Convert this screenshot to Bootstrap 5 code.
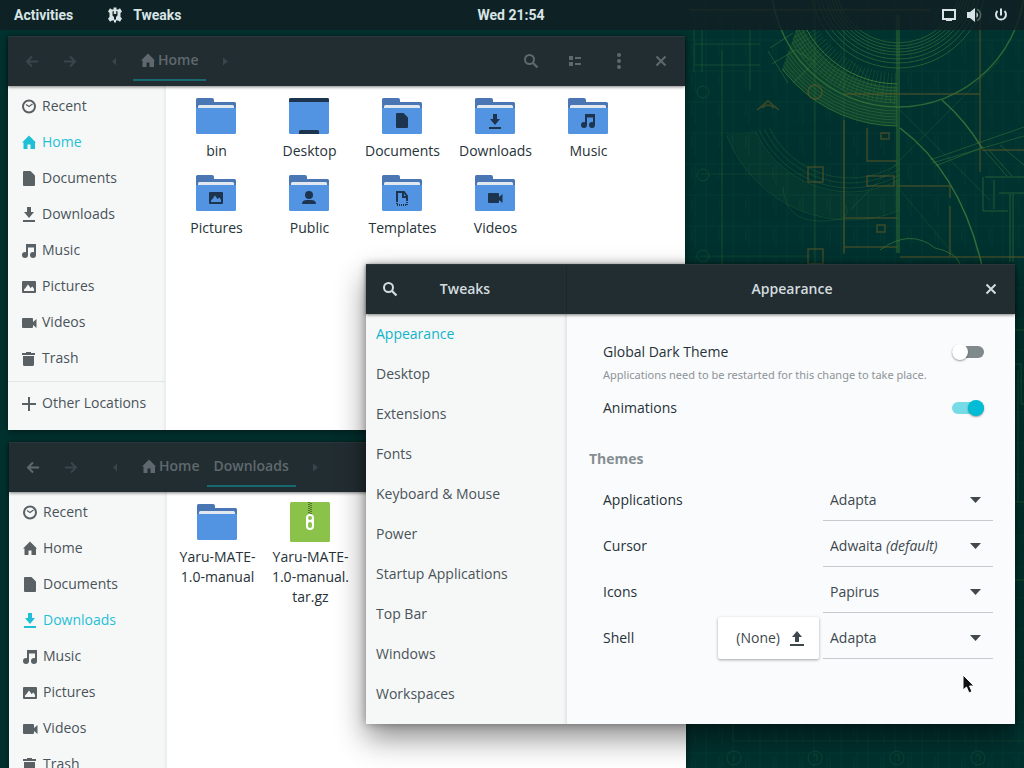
<!DOCTYPE html>
<html lang="en">
<head>
<meta charset="utf-8">
<meta name="viewport" content="width=device-width, initial-scale=1">
<title>Desktop</title>
<link href="https://cdn.jsdelivr.net/npm/bootstrap@5.3.0/dist/css/bootstrap.min.css" rel="stylesheet">
<style>
  body { font-family: "Open Sans", "Noto Sans", sans-serif; font-size: 14px; line-height: 20px; background: #00322f; color: #263238; }
  .desktop { height: 100vh; }
  .wallpaper { inset: 0; }
  .topbar { display: grid; grid-template-columns: 1fr auto 1fr; height: 30px; padding: 0 16px 0 14px; background: rgba(18, 30, 35, .78); color: #d8e4e6; font-family: Roboto, sans-serif; font-weight: 700; }
  .topbar button, .headbar button { color: inherit; background: none; border: 0; padding: 0; font: inherit; }
  svg { display: block; flex: none; }

  .window { background: #fff; display: flex; flex-direction: column; isolation: isolate; box-shadow: 0 2px 8px rgba(0, 0, 0, .45); }
  .win-home { left: 8px; right: 339px; top: 36px; }
  .win-downloads { left: 9px; right: 338px; top: 442px; bottom: 0; }
  .win-tweaks { left: 366px; right: 9px; top: 264px; background: #fafbfd; box-shadow: 0 14px 28px rgba(0, 0, 0, .45), 0 0 8px rgba(0, 0, 0, .3); }

  .headbar { height: 50px; flex: none; padding: 0 4px 2px 5px; background: #222d32; color: #5f696d; border-top: 1px solid #2b363a; box-shadow: 0 1px 3px rgba(0, 0, 0, .5); font-weight: 600; position: relative; z-index: 1; }
  .headbar .tool { width: 38px; height: 46px; display: flex; align-items: center; justify-content: center; }
  .headbar .tool-wide { width: 44px; }
  .headbar .tool-prev { width: 44px; padding-left: 5px; }
  .headbar .tool-close { width: 40px; }
  .headbar button:disabled { color: #39454a; }
  .crumb { height: 40px; padding: 0 7px; border-bottom: 2px solid transparent; color: #5f696d; text-decoration: none; display: flex; align-items: center; gap: 2px; }
  .crumb.current { border-color: #17696f; }

  .places { width: 158px; flex: none; background: #f6f8f8; border-right: 1px solid #eceeef; box-shadow: inset -3px 0 3px -2px rgba(0, 0, 0, .05); padding-top: 2px; }
  .places-full { padding-bottom: 9px; }
  .place { display: flex; align-items: center; gap: 5px; height: 36px; padding-left: 13px; color: #4a5358; text-decoration: none; white-space: nowrap; }
  .place svg { color: #596165; }
  .place.active, .place.active svg { color: #1fc0d5; }
  .places hr { margin: 5px 0 3px; border-color: #a9afb2; }

  .files { display: flex; flex-wrap: wrap; align-content: flex-start; row-gap: 12px; padding: 10px 0 0 4px; flex: 1; min-width: 0; }
  .file { width: 93px; text-align: center; color: #263238; text-decoration: none; }
  .file svg { margin: 0 0 5px 26px; }

  .win-tweaks .headbar { color: #d3dcdf; padding: 0 2px 2px; }
  .side-col { width: 201px; flex: none; }
  .headbar .side-col { width: 199px; border-right: 1px solid #1d272b; }
  .sections { background: #f6f8f8; border-right: 1px solid #e4e7e8; box-shadow: inset -3px 0 3px -2px rgba(0, 0, 0, .08); padding-bottom: 10px; }
  .section-link { display: flex; align-items: center; height: 40px; padding-left: 10px; color: #4a5358; text-decoration: none; }
  .section-link.active { color: #10b4c8; }
  .settings { padding: 28px 22px 0 36px; }
  .setting { display: flex; align-items: center; justify-content: space-between; }
  .setting-switch { padding-right: 9px; height: 20px; }
  .hint { font-family: "Noto Sans", sans-serif; font-size: 11px; line-height: 18px; color: #8c9497; margin: 4px 0 14px; }
  .settings h2 { font-size: 14px; line-height: 20px; font-weight: 700; color: #868e91; margin: 31px 0 10px -14px; }
  .theme-row { height: 42px; margin-bottom: 4px; }
  .pick { width: 170px; position: relative; }
  .pick select { width: 100%; height: 42px; appearance: none; border: 0; border-bottom: 1px solid #c6cacc; border-radius: 0; background: transparent; color: #3d484d; padding: 0 30px 0 7px; font: inherit; line-height: 20px; }
  .pick svg { position: absolute; right: 12px; top: 18px; pointer-events: none; color: #40484c; }
  .pick em { position: absolute; left: 63px; top: 11px; pointer-events: none; color: #3d484d; }
  .load { display: flex; align-items: center; gap: 9px; height: 42px; padding: 0 14px 0 18px; margin-right: 4px; border: 0; border-radius: 2px; background: #fff; color: #3d484d; box-shadow: 0 1px 3px rgba(0, 0, 0, .35); }
  .toggle { appearance: none; width: 32px; height: 16px; margin: 0; position: relative; }
  .toggle::before { content: ""; position: absolute; inset: 2px 0; border-radius: 6px; background: #80898c; }
  .toggle::after { content: ""; position: absolute; left: 0; top: 0; width: 16px; height: 16px; border-radius: 8px; background: #fff; box-shadow: 0 1px 2px rgba(0, 0, 0, .4); }
  .toggle:checked::before { background: #74dbe7; }
  .toggle:checked::after { left: 16px; background: #00bcd4; }
  .pointer { left: 962px; top: 674px; }
</style>
</head>
<body class="overflow-hidden">

<svg class="d-none" aria-hidden="true">
  <symbol id="i-clock" viewBox="0 0 16 16"><circle cx="8" cy="8.500" r="6" fill="none" stroke="currentColor" stroke-width="2"/><path d="M5 6.500l3 2 3.500-2.500" fill="none" stroke="currentColor" stroke-width="1.300"/></symbol>
  <symbol id="i-home" viewBox="0 0 16 16"><path d="M8 1.500L15 8.500h-1V15H9.500V10.500h-3V15H2.500V8.500H1z" fill="currentColor"/></symbol>
  <symbol id="i-doc" viewBox="0 0 16 16"><path d="M3 1h6.500L14 5.500V15a1 1 0 0 1-1 1H3a1 1 0 0 1-1-1V2a1 1 0 0 1 1-1z" fill="currentColor"/></symbol>
  <symbol id="i-down" viewBox="0 0 16 16"><path d="M6 1h4v5h3l-5 6-5-6h3zM2 14h12v2H2z" fill="currentColor"/></symbol>
  <symbol id="i-up" viewBox="0 0 16 16"><path d="M6 12h4V7h3L8 1 3 7h3zM1 14h14v2H1z" fill="currentColor"/></symbol>
  <symbol id="i-music" viewBox="0 0 16 16"><path d="M5 2h10V12.500H13V5.500H7v7H5z" fill="currentColor"/><circle cx="4" cy="13" r="3" fill="currentColor"/><circle cx="12" cy="13" r="3" fill="currentColor"/></symbol>
  <symbol id="i-pic" viewBox="0 0 16 16"><path fill-rule="evenodd" d="M2 3h12a1 1 0 0 1 1 1v10a1 1 0 0 1-1 1H2a1 1 0 0 1-1-1V4a1 1 0 0 1 1-1zM3 13h10V11l-1.500-2.500-2 1.500L7 6.500 4.500 10 3 11.500z" fill="currentColor"/></symbol>
  <symbol id="i-video" viewBox="0 0 16 16"><path d="M2 4h9a1 1 0 0 1 1 1v3l3.500-3v9L12 11v2a1 1 0 0 1-1 1H2a1 1 0 0 1-1-1V5a1 1 0 0 1 1-1z" fill="currentColor"/></symbol>
  <symbol id="i-trash" viewBox="0 0 16 16"><path d="M5 2h5V3h4v2H1V3h4zM2 6h11v8.500a1.500 1.500 0 0 1-1.500 1.500h-8A1.500 1.500 0 0 1 2 14.500z" fill="currentColor"/></symbol>
  <symbol id="i-plus" viewBox="0 0 16 16"><path d="M1 9h14M8 2v14" stroke="currentColor" stroke-width="2"/></symbol>
  <symbol id="i-back" viewBox="0 0 16 16"><path d="M14 8.500H3M8 3.500L3 8.500 8 13.500" fill="none" stroke="currentColor" stroke-width="2"/></symbol>
  <symbol id="i-fwd" viewBox="0 0 16 16"><path d="M2 8.500h11M8 3.500l5 5L8 13.500" fill="none" stroke="currentColor" stroke-width="2"/></symbol>
  <symbol id="i-left" viewBox="0 0 16 16"><path d="M10 4.500v8l-4-4z" fill="currentColor"/></symbol>
  <symbol id="i-right" viewBox="0 0 16 16"><path d="M6 4.500v8l5-4z" fill="currentColor"/></symbol>
  <symbol id="i-search" viewBox="0 0 16 16"><circle cx="6.500" cy="6.500" r="4.500" fill="none" stroke="currentColor" stroke-width="2"/><path d="M10 10l4.500 4.500" stroke="currentColor" stroke-width="2.300"/></symbol>
  <symbol id="i-list" viewBox="0 0 16 16"><path d="M2 3h4v4H2zM2 9h4v4H2zM8 4h6v2H8zM8 10h6v2H8z" fill="currentColor"/></symbol>
  <symbol id="i-dots" viewBox="0 0 16 16"><circle cx="8" cy="2" r="2" fill="currentColor"/><circle cx="8" cy="8" r="2" fill="currentColor"/><circle cx="8" cy="14" r="2" fill="currentColor"/></symbol>
  <symbol id="i-close" viewBox="0 0 16 16"><path d="M3.500 3.500l9 9M12.500 3.500l-9 9" stroke="currentColor" stroke-width="2"/></symbol>
  <symbol id="i-caret" viewBox="0 0 11 6"><path d="M0 0h11L5.500 6z" fill="currentColor"/></symbol>
  <symbol id="i-folder" viewBox="0 0 40 40"><path d="M1.500 2H16a2 2 0 0 1 2 2v2h20.500A1.500 1.500 0 0 1 40 7.500V20H0V3.500A1.500 1.500 0 0 1 1.500 2z" fill="#4a76b4"/><path d="M2 15V10.500A1.500 1.500 0 0 1 3.500 9h33a1.500 1.500 0 0 1 1.500 1.500V15z" fill="#e1e8f0"/><path d="M0 12h40v24.500a1.500 1.500 0 0 1-1.500 1.500h-37A1.500 1.500 0 0 1 0 36.500z" fill="#5294e2"/></symbol>
</svg>

<div class="desktop position-relative overflow-hidden">
  <svg class="wallpaper position-absolute w-100 h-100" viewBox="0 0 1024 768" preserveAspectRatio="xMaxYMin slice" aria-hidden="true">
    <defs>
      <clipPath id="sector"><path d="M796 30h101v98H842L780 75z"/></clipPath>
      <clipPath id="half"><path d="M690 140L900 110V230H720z"/></clipPath>
      <pattern id="grid" width="27" height="31" patternUnits="userSpaceOnUse"><path d="M4 0v31M0 9h27M17 12v12M20 9v22" stroke="#2a7b43" stroke-width="1" opacity=".1"/></pattern>
    </defs>
    <rect width="1024" height="768" fill="#00322f"/>
    <rect x="685" width="339" height="768" fill="url(#grid)"/>
    <g fill="none" stroke="#3a7a38">
      <g clip-path="url(#sector)">
        <g stroke-width="1" opacity=".5"><circle cx="898" cy="-20" r="108"/><circle cx="898" cy="-20" r="111"/><circle cx="898" cy="-20" r="114"/><circle cx="898" cy="-20" r="117"/><circle cx="898" cy="-20" r="120"/><circle cx="898" cy="-20" r="123"/><circle cx="898" cy="-20" r="131"/><circle cx="898" cy="-20" r="134"/><circle cx="898" cy="-20" r="137"/><circle cx="898" cy="-20" r="140"/><circle cx="898" cy="-20" r="143"/></g>
        <circle cx="898" cy="-20" r="126" stroke-width="40" opacity=".22"/>
        <circle cx="898" cy="-20" r="108" stroke-width="30" stroke-dasharray="1 3" opacity=".3"/>
        <circle cx="898" cy="-20" r="146" opacity=".8"/><circle cx="898" cy="-20" r="104"/>
      </g>
      <g opacity=".6"><circle cx="898" cy="-20" r="63"/><circle cx="898" cy="-20" r="66"/><circle cx="898" cy="-20" r="69"/><circle cx="898" cy="-20" r="72"/><circle cx="898" cy="-20" r="75"/><circle cx="898" cy="-20" r="79"/><circle cx="898" cy="-20" r="83"/><circle cx="898" cy="-20" r="88"/></g>
      <circle cx="898" cy="-20" r="127" stroke-width="1.500" opacity=".75"/>
      <path d="M897 15v238M899 15v238" opacity=".8"/>
      <path d="M900 128C940 158 968 205 982 266M942 100Q965 120 982 148" stroke-width="1.500" opacity=".85"/>
      <path d="M930 160L1024 127M932 163L1024 136M935 166L984 147M984 150L1007 176M989 150L1012 176M1000 145L1024 165" opacity=".5"/>
      <path d="M770 48L793 33M768 51L788 83M772 64L795 50 815 62 793 83" opacity=".5"/>
      <g clip-path="url(#half)" opacity=".3"><circle cx="850" cy="88" r="132"/><circle cx="850" cy="88" r="104"/><circle cx="850" cy="88" r="95"/><circle cx="850" cy="88" r="100"/><circle cx="850" cy="88" r="90"/><circle cx="850" cy="88" r="118" stroke-width="26" opacity=".3"/></g>
      <path d="M695 44H760M695 65H760M702 30v42M694 30v42M722 50v214M815 0v264M844 30v222M750 30v60" opacity=".35"/>
      <path d="M985 177h39M983 177v34h25M994 180v29M999 193h25M1010 194v68M1013 194v68" opacity=".6"/>
      <path d="M700 174h120M700 256h110M850 60L990 200M900 190L960 262M1000 60L850 210" opacity=".22"/>
      <path d="M880 250q30-22 55-2 20 4 25 16" opacity=".7"/>
      <path d="M783 187Q785 221 820 221T845 205" opacity=".25"/>
      <path d="M1015 330h9M1015 364h6v40h3M1015 502h9M1018 370v132M1015 580h9" opacity=".45"/>
      <path d="M733 724v17h291" opacity=".2"/>
      <g opacity=".28"><circle cx="703" cy="92" r="6"/><circle cx="703" cy="175" r="6"/><circle cx="703" cy="256" r="6"/><circle cx="734" cy="758" r="7"/><circle cx="815" cy="758" r="7"/><circle cx="897" cy="758" r="7"/><circle cx="978" cy="758" r="7"/><path d="M734 755v6M813 755h4v6M895 755h4v6M976 755h4v6"/></g>
    </g>
    <g fill="none" stroke="#655a26" stroke-width="1.500" opacity=".6">
      <path d="M844 94H980M980 15v157M982 150h42M897 186h53v12M844 218h53M844 247h53M900 257h124M844 120v134M867 128v33h30M867 176h27v10h-27zM950 206v50M690 10h240"/>
      <path d="M757 110l11-9 11 9M762 108q6-6 12 0"/>
      <rect x="808" y="167" width="15" height="15"/><rect x="808" y="249" width="15" height="15"/><circle cx="815" cy="92" r="7"/>
      <rect x="881" y="133" width="8" height="6"/><rect x="877" y="225" width="8" height="7"/>
    </g>
  </svg>

  <header class="topbar position-relative align-items-center">
    <div class="d-flex align-items-center">
      <button type="button">Activities</button>
      <button type="button" class="d-flex align-items-center gap-2 ps-3 ms-3">
        <svg width="20" height="16" viewBox="0 0 20 16" aria-hidden="true"><path fill="currentColor" fill-rule="evenodd" d="M8.500 0.500h3v2h1.500L15 1.200l2 3.300L15.500 6v4l1.500 1.500-2 3.300L13 13.500h-2V15.500H9V13.500H7L5 14.800l-2-3.300L4.500 10V6L3 4.500 5 1.200l2 1.300h1.500zM7.500 4.500v4L9 10v2.500h2V10l1.500-1.500v-4L11.200 4v3H8.800V4z"/></svg>
        <span>Tweaks</span>
      </button>
    </div>
    <button type="button">Wed 21:54</button>
    <button type="button" class="d-flex align-items-center justify-content-end gap-2" aria-label="System menu">
      <svg width="18" height="16" viewBox="0 0 18 16"><path fill="none" stroke="currentColor" stroke-width="2" d="M3 3h12v9H3z"/><path fill="currentColor" d="M6 11h6v3H6z"/></svg>
      <svg width="18" height="16" viewBox="0 0 18 16"><path fill="currentColor" d="M1 5h3l5-4v14l-5-4H1zM10.500 5q3 3 0 6z"/><path d="M11 2.500a6 6 0 0 1 0 11" fill="none" stroke="currentColor" stroke-width="1.500" opacity=".35"/></svg>
      <svg width="16" height="16" viewBox="0 0 16 16"><path d="M5.500 4a5 5 0 1 0 7 0M9 1.500v7" fill="none" stroke="currentColor" stroke-width="2"/></svg>
    </button>
  </header>

  <main>
    <section class="window win-home position-absolute" aria-label="Home">
      <div class="headbar d-flex align-items-center">
        <button type="button" class="tool" disabled aria-label="Back"><svg width="16" height="16"><use href="#i-back"/></svg></button>
        <button type="button" class="tool" disabled aria-label="Forward"><svg width="16" height="16"><use href="#i-fwd"/></svg></button>
        <button type="button" class="tool tool-prev" disabled aria-label="Earlier folders"><svg width="16" height="16"><use href="#i-left"/></svg></button>
        <a href="#home" class="crumb current"><svg width="16" height="16"><use href="#i-home"/></svg>Home</a>
        <button type="button" class="tool" disabled aria-label="Later folders"><svg width="16" height="16"><use href="#i-right"/></svg></button>
        <button type="button" class="tool tool-wide ms-auto" aria-label="Search"><svg width="16" height="16"><use href="#i-search"/></svg></button>
        <button type="button" class="tool tool-wide" aria-label="List view"><svg width="16" height="16"><use href="#i-list"/></svg></button>
        <button type="button" class="tool tool-wide" aria-label="Menu"><svg width="16" height="16"><use href="#i-dots"/></svg></button>
        <button type="button" class="tool tool-close" aria-label="Close"><svg width="16" height="16"><use href="#i-close"/></svg></button>
      </div>
      <div class="d-flex">
        <nav class="places places-full">
          <a href="#recent" class="place"><svg width="16" height="16"><use href="#i-clock"/></svg>Recent</a>
          <a href="#home" class="place active"><svg width="16" height="16"><use href="#i-home"/></svg>Home</a>
          <a href="#documents" class="place"><svg width="16" height="16"><use href="#i-doc"/></svg>Documents</a>
          <a href="#downloads" class="place"><svg width="16" height="16"><use href="#i-down"/></svg>Downloads</a>
          <a href="#music" class="place"><svg width="16" height="16"><use href="#i-music"/></svg>Music</a>
          <a href="#pictures" class="place"><svg width="16" height="16"><use href="#i-pic"/></svg>Pictures</a>
          <a href="#videos" class="place"><svg width="16" height="16"><use href="#i-video"/></svg>Videos</a>
          <a href="#trash" class="place"><svg width="16" height="16"><use href="#i-trash"/></svg>Trash</a>
          <hr>
          <a href="#other" class="place"><svg width="16" height="16"><use href="#i-plus"/></svg>Other Locations</a>
        </nav>
        <div class="files">
          <a href="#bin" class="file"><svg width="40" height="40"><use href="#i-folder"/></svg>bin</a>
          <a href="#desktop" class="file"><svg width="40" height="40" viewBox="0 0 40 40"><rect y="2" width="40" height="36" rx="1.500" fill="#5294e2"/><path d="M1.500 2h37A1.500 1.500 0 0 1 40 3.500V6H0V3.500A1.500 1.500 0 0 1 1.500 2zM10 38v-2.500a1.500 1.500 0 0 1 1.500-1.500h17a1.500 1.500 0 0 1 1.500 1.500V38z" fill="#1d344f"/></svg>Desktop</a>
          <a href="#documents" class="file"><svg width="40" height="40" color="#1d344f"><use href="#i-folder"/><use href="#i-doc" x="12" y="16" width="16" height="16"/></svg>Documents</a>
          <a href="#downloads" class="file"><svg width="40" height="40" color="#1d344f"><use href="#i-folder"/><use href="#i-down" x="12" y="17" width="16" height="16"/></svg>Downloads</a>
          <a href="#music" class="file"><svg width="40" height="40" color="#1d344f"><use href="#i-folder"/><use href="#i-music" x="12" y="16" width="16" height="16"/></svg>Music</a>
          <a href="#pictures" class="file"><svg width="40" height="40" color="#1d344f"><use href="#i-folder"/><use href="#i-pic" x="12" y="16" width="16" height="16"/></svg>Pictures</a>
          <a href="#public" class="file"><svg width="40" height="40"><use href="#i-folder"/><circle cx="20" cy="22" r="4" fill="#1d344f"/><path d="M13 31q0-4 5-4h4q5 0 5 4z" fill="#1d344f"/></svg>Public</a>
          <a href="#templates" class="file"><svg width="40" height="40"><use href="#i-folder"/><path d="M15 28V19h7l3 4v5M21 19v5h4" fill="none" stroke="#1d344f" stroke-width="2"/><path d="M15 28v4h10v-4" fill="none" stroke="#1d344f" stroke-width="2" stroke-dasharray="1 1"/></svg>Templates</a>
          <a href="#videos" class="file"><svg width="40" height="40" color="#1d344f"><use href="#i-folder"/><use href="#i-video" x="12" y="16" width="16" height="16"/></svg>Videos</a>
        </div>
      </div>
    </section>

    <section class="window win-downloads position-absolute" aria-label="Downloads">
      <div class="headbar d-flex align-items-center">
        <button type="button" class="tool" aria-label="Back"><svg width="16" height="16"><use href="#i-back"/></svg></button>
        <button type="button" class="tool" disabled aria-label="Forward"><svg width="16" height="16"><use href="#i-fwd"/></svg></button>
        <button type="button" class="tool tool-prev" disabled aria-label="Earlier folders"><svg width="16" height="16"><use href="#i-left"/></svg></button>
        <a href="#home" class="crumb"><svg width="16" height="16"><use href="#i-home"/></svg>Home</a>
        <a href="#downloads" class="crumb current">Downloads</a>
        <button type="button" class="tool" disabled aria-label="Later folders"><svg width="16" height="16"><use href="#i-right"/></svg></button>
      </div>
      <div class="d-flex flex-grow-1 overflow-hidden">
        <nav class="places">
          <a href="#recent" class="place"><svg width="16" height="16"><use href="#i-clock"/></svg>Recent</a>
          <a href="#home" class="place"><svg width="16" height="16"><use href="#i-home"/></svg>Home</a>
          <a href="#documents" class="place"><svg width="16" height="16"><use href="#i-doc"/></svg>Documents</a>
          <a href="#downloads" class="place active"><svg width="16" height="16"><use href="#i-down"/></svg>Downloads</a>
          <a href="#music" class="place"><svg width="16" height="16"><use href="#i-music"/></svg>Music</a>
          <a href="#pictures" class="place"><svg width="16" height="16"><use href="#i-pic"/></svg>Pictures</a>
          <a href="#videos" class="place"><svg width="16" height="16"><use href="#i-video"/></svg>Videos</a>
          <a href="#trash" class="place"><svg width="16" height="16"><use href="#i-trash"/></svg>Trash</a>
        </nav>
        <div class="files">
          <a href="#manual" class="file"><svg width="40" height="40"><use href="#i-folder"/></svg>Yaru-MATE-<br>1.0-manual</a>
          <a href="#archive" class="file"><svg width="40" height="40" viewBox="0 0 40 40"><rect width="40" height="40" rx="1.500" fill="#8bc34a"/><path d="M19 0v12M21 1v11" stroke="#3f5b20" stroke-width="1.500" stroke-dasharray="1 1"/><path fill-rule="evenodd" fill="#fff" d="M20 12a4 4 0 0 1 4 4v8a4 4 0 0 1-8 0v-8a4 4 0 0 1 4-4zM20 14a2 2 0 1 0 0 4 2 2 0 0 0 0-4zM20 20a2 2 0 0 0-2 2v2a2 2 0 0 0 4 0v-2A2 2 0 0 0 20 20z"/></svg>Yaru-MATE-<br>1.0-manual.<br>tar.gz</a>
        </div>
      </div>
    </section>

    <section class="window win-tweaks position-absolute" aria-label="Tweaks">
      <div class="headbar d-flex align-items-center">
        <div class="side-col d-flex align-items-center">
          <button type="button" class="tool tool-wide flex-shrink-0" aria-label="Search"><svg width="16" height="16"><use href="#i-search"/></svg></button>
          <span class="flex-grow-1 text-center pe-5">Tweaks</span>
        </div>
        <span class="flex-grow-1 text-center ps-5">Appearance</span>
        <button type="button" class="tool tool-wide" aria-label="Close"><svg width="16" height="16"><use href="#i-close"/></svg></button>
      </div>
      <div class="d-flex">
        <nav class="side-col sections">
          <a href="#appearance" class="section-link active">Appearance</a>
          <a href="#desktop" class="section-link">Desktop</a>
          <a href="#extensions" class="section-link">Extensions</a>
          <a href="#fonts" class="section-link">Fonts</a>
          <a href="#keyboard" class="section-link">Keyboard &amp; Mouse</a>
          <a href="#power" class="section-link">Power</a>
          <a href="#startup" class="section-link">Startup Applications</a>
          <a href="#topbar" class="section-link">Top Bar</a>
          <a href="#windows" class="section-link">Windows</a>
          <a href="#workspaces" class="section-link">Workspaces</a>
        </nav>
        <form class="settings flex-grow-1">
          <div class="setting setting-switch">
            <label for="dark">Global Dark Theme</label>
            <input type="checkbox" role="switch" class="toggle" id="dark">
          </div>
          <p class="hint">Applications need to be restarted for this change to take place.</p>
          <div class="setting setting-switch">
            <label for="anim">Animations</label>
            <input type="checkbox" role="switch" class="toggle" id="anim" checked>
          </div>
          <h2>Themes</h2>
          <div class="setting theme-row">
            <label for="apps">Applications</label>
            <div class="pick"><select id="apps"><option>Adapta</option></select><svg width="11" height="6"><use href="#i-caret"/></svg></div>
          </div>
          <div class="setting theme-row">
            <label for="cursor">Cursor</label>
            <div class="pick"><select id="cursor"><option>Adwaita</option></select><em>(default)</em><svg width="11" height="6"><use href="#i-caret"/></svg></div>
          </div>
          <div class="setting theme-row">
            <label for="icons">Icons</label>
            <div class="pick"><select id="icons"><option>Papirus</option></select><svg width="11" height="6"><use href="#i-caret"/></svg></div>
          </div>
          <div class="setting theme-row">
            <label for="shell" class="me-auto">Shell</label>
            <button type="button" class="load">(None)<svg width="16" height="16"><use href="#i-up"/></svg></button>
            <div class="pick"><select id="shell"><option>Adapta</option></select><svg width="11" height="6"><use href="#i-caret"/></svg></div>
          </div>
        </form>
      </div>
    </section>
  </main>

  <svg class="pointer position-absolute" width="14" height="21" viewBox="0 0 14 21" aria-hidden="true"><path d="M1 1v15l3.500-3 2.500 6 3-1.500-2.500-5.500H12z" fill="#111" stroke="#fff" stroke-width="1"/></svg>
</div>

<script src="https://cdn.jsdelivr.net/npm/bootstrap@5.3.0/dist/js/bootstrap.bundle.min.js"></script>
</body>
</html>
